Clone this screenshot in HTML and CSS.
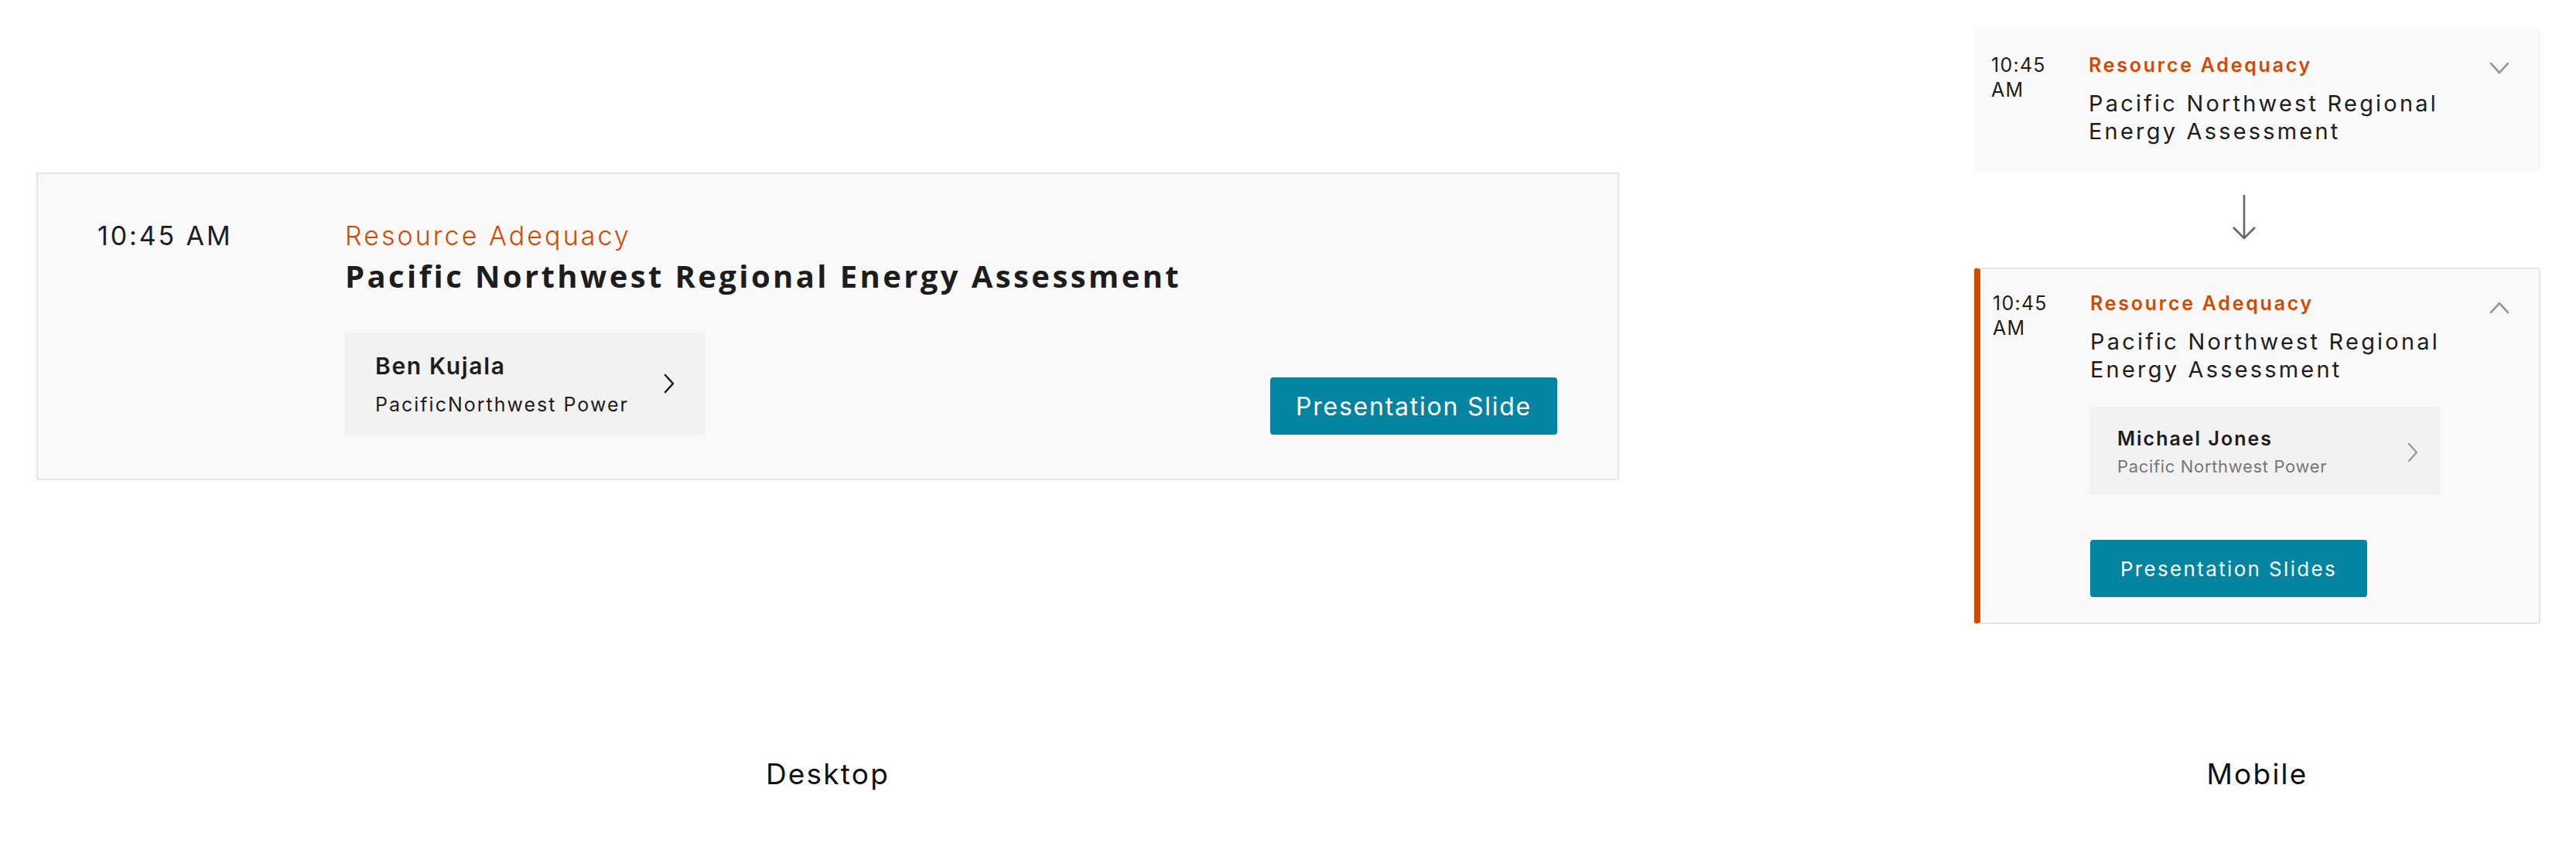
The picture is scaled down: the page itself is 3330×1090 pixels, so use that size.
FILE: index.html
```html
<!DOCTYPE html>
<html lang="en">
<head>
    <meta charset="UTF-8">
    <title>Agenda Item - Desktop and Mobile</title>
    <link rel="stylesheet" href="styles.css">
</head>
<body>
    <div class="board">
        <!-- Desktop -->
        <div class="desktop-col">
            <div class="session">
                <div class="session-time">10:45 AM</div>
                <div class="session-body">
                    <div class="session-track">Resource Adequacy</div>
                    <div class="session-title">Pacific Northwest Regional Energy Assessment</div>
                    <div class="session-footer">
                        <div class="speaker">
                            <div class="speaker-info">
                                <div class="speaker-name">Ben Kujala</div>
                                <div class="speaker-org">PacificNorthwest Power</div>
                            </div>
                            <svg class="speaker-chevron" width="16" height="26" viewBox="0 0 16 26">
                                <path d="M3 2 L13 13 L3 24" fill="none" stroke="#1d1d1d" stroke-width="2.6" stroke-linecap="round" stroke-linejoin="round"/>
                            </svg>
                        </div>
                        <button class="slides-btn">Presentation Slide</button>
                    </div>
                </div>
            </div>
        </div>

        <!-- Mobile -->
        <div class="mobile-col">
            <div class="m-card">
                <div class="m-time">10:45<br>AM</div>
                <div class="m-body">
                    <div class="m-track">Resource Adequacy</div>
                    <div class="m-title">Pacific Northwest Regional Energy Assessment</div>
                </div>
                <svg class="m-toggle" width="26" height="16" viewBox="0 0 26 16">
                    <path d="M2 2 L13 14 L24 2" fill="none" stroke="#9a9a9a" stroke-width="2.6" stroke-linecap="round" stroke-linejoin="round"/>
                </svg>
            </div>

            <svg class="m-arrow" width="32" height="60" viewBox="0 0 32 60">
                <path d="M16 1 L16 57 M2 43 L16 57 L30 43" fill="none" stroke="#666" stroke-width="2.6" stroke-linejoin="round"/>
            </svg>

            <div class="m-card open">
                <div class="m-time">10:45<br>AM</div>
                <div class="m-body">
                    <div class="m-track">Resource Adequacy</div>
                    <div class="m-title">Pacific Northwest Regional Energy Assessment</div>
                    <div class="m-speaker">
                        <div>
                            <div class="m-speaker-name">Michael Jones</div>
                            <div class="m-speaker-org">Pacific Northwest Power</div>
                        </div>
                        <svg width="16" height="26" viewBox="0 0 16 26">
                            <path d="M3 2 L13 13 L3 24" fill="none" stroke="#9a9a9a" stroke-width="2.4" stroke-linecap="round" stroke-linejoin="round"/>
                        </svg>
                    </div>
                    <button class="m-btn">Presentation Slides</button>
                </div>
                <svg class="m-toggle" width="26" height="16" viewBox="0 0 26 16">
                    <path d="M2 14 L13 2 L24 14" fill="none" stroke="#9a9a9a" stroke-width="2.6" stroke-linecap="round" stroke-linejoin="round"/>
                </svg>
            </div>
        </div>

        <div class="caption">Desktop</div>
        <div class="caption">Mobile</div>
    </div>
</body>
</html>
```

FILE: styles.css
```css
body {
    margin: 0;
    background-color: #ffffff;
    font-family: Inter, "Liberation Sans", sans-serif;
    color: #1d1d1d;
}
.board {
    display: grid;
    grid-template-columns: 2046px 732px;
    column-gap: 459px;
    row-gap: 170px;
    padding: 36px 0 0 47px;
}
button {
    font-family: inherit;
    border: none;
    cursor: pointer;
}

/* desktop card */
.desktop-col {
    padding-top: 187px;
}
.session {
    display: flex;
    background-color: #f9f9f9;
    border: 2px solid #e6e6e6;
    padding: 60px 78px 57px 77px;
}
.session-time {
    width: 320px;
    flex-shrink: 0;
    font-size: 34px;
    line-height: 40px;
    letter-spacing: 0.085em;
}
.session-body {
    flex: 1;
}
.session-track {
    font-size: 34px;
    line-height: 40px;
    font-weight: 300;
    letter-spacing: 0.09em;
    color: #d04a02;
}
.session-title {
    margin-top: 8px;
    font-family: "Open Sans", sans-serif;
    font-size: 40px;
    line-height: 48px;
    font-weight: 700;
    letter-spacing: 0.085em;
}
.session-footer {
    display: flex;
    justify-content: space-between;
    align-items: flex-end;
    margin-top: 49px;
}
.speaker {
    width: 466px;
    height: 132px;
    box-sizing: border-box;
    display: flex;
    align-items: center;
    justify-content: space-between;
    padding: 0 39px 0 39px;
    background-color: #f2f2f2;
    border-radius: 4px;
}
.speaker-name {
    font-size: 30px;
    line-height: 36px;
    font-weight: 600;
    letter-spacing: 0.055em;
}
.speaker-org {
    margin-top: 17px;
    font-size: 25px;
    line-height: 30px;
    letter-spacing: 0.08em;
}
.slides-btn {
    width: 371px;
    height: 74px;
    background-color: #0384a0;
    color: white;
    font-size: 32px;
    letter-spacing: 0.055em;
    border-radius: 4px;
}

/* mobile cards */
.mobile-col {
    display: flex;
    flex-direction: column;
}
.m-card {
    display: flex;
    background-color: #f9f9f9;
    border-radius: 4px;
    padding: 32px 40px 33px 22px;
}
.m-card.open {
    border: 2px solid #e4e4e4;
    border-left: 8px solid #d04a02;
    padding: 28px 38px 33px 16px;
}
.m-time {
    width: 126px;
    flex-shrink: 0;
    font-size: 25px;
    line-height: 32px;
    letter-spacing: 0.05em;
}
.m-body {
    flex: 1;
}
.m-track {
    font-size: 25px;
    line-height: 32px;
    font-weight: 600;
    letter-spacing: 0.11em;
    color: #d04a02;
}
.m-title {
    margin-top: 16px;
    width: 500px;
    font-size: 29px;
    line-height: 36px;
    letter-spacing: 0.11em;
}
.m-toggle {
    margin-top: 12px;
    flex-shrink: 0;
}
.m-card.open .m-toggle {
    margin-top: 14px;
}
.m-arrow {
    margin: 30px 0 35px 333px;
}
.m-speaker {
    width: 453px;
    box-sizing: border-box;
    margin-top: 30px;
    display: flex;
    align-items: center;
    justify-content: space-between;
    padding: 26px 28px 23px 35px;
    background-color: #f2f2f2;
    border-radius: 4px;
}
.m-speaker-name {
    font-size: 25px;
    line-height: 30px;
    font-weight: 600;
    letter-spacing: 0.08em;
}
.m-speaker-org {
    margin-top: 7px;
    font-size: 22px;
    line-height: 28px;
    letter-spacing: 0.03em;
    color: #777;
}
.m-btn {
    display: block;
    margin-top: 58px;
    width: 358px;
    height: 74px;
    background-color: #0384a0;
    color: white;
    font-size: 26px;
    letter-spacing: 0.09em;
    border-radius: 4px;
}

.caption {
    text-align: center;
    font-size: 37px;
    line-height: 44px;
    letter-spacing: 0.06em;
    color: #111;
    margin-top: 2px;
}
```
